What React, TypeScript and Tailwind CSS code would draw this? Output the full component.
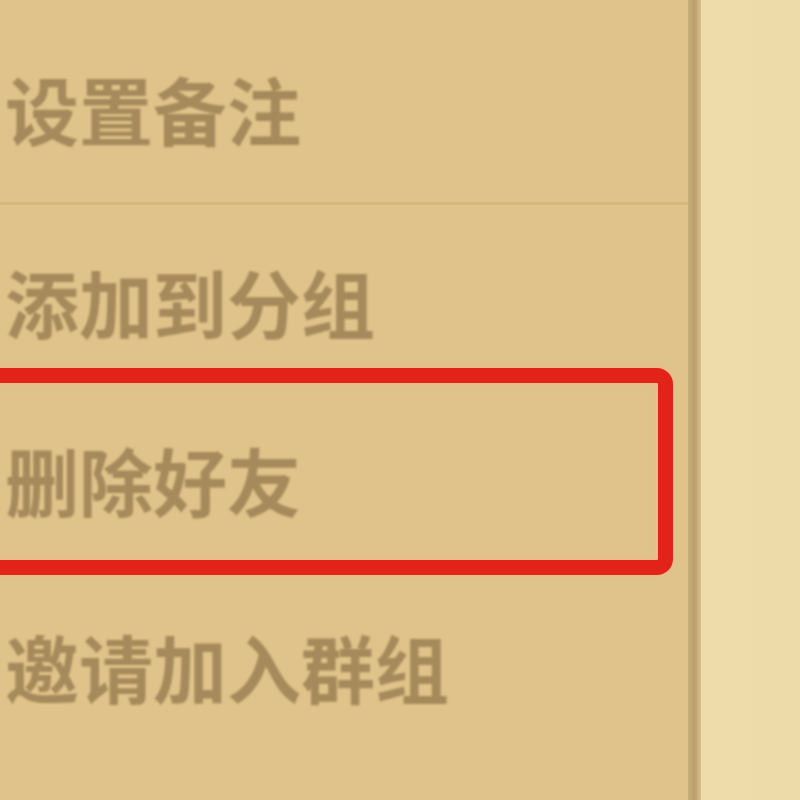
import React from "react";

const font = { fontFamily: '"Noto Sans CJK SC", "Noto Sans", sans-serif' };

export default function App() {
  return (
    <div className="flex h-[800px] w-[800px] overflow-hidden bg-[#efdcab]" style={font}>
      <div className="relative flex w-[688px] flex-col bg-[#e0c38a]">
        <div className="h-[205px] border-b-[3px] border-[#d5b77c] pl-[5px] pt-[71px]">
          <span className="block text-[74px] leading-none font-bold text-[#a68a5b] blur-[1.3px]">设置备注</span>
        </div>
        <div className="h-[185px] pl-[5px] pt-[59px]">
          <span className="block text-[74px] leading-none font-bold text-[#a68a5b] blur-[1.3px]">添加到分组</span>
        </div>
        <div className="h-[185px] pl-[5px] pt-[52px]">
          <span className="block text-[74px] leading-none font-bold text-[#a68a5b] blur-[1.3px]">删除好友</span>
        </div>
        <div className="flex-1 pl-[5px] pt-[54px]">
          <span className="block text-[74px] leading-none font-bold text-[#a68a5b] blur-[1.3px]">邀请加入群组</span>
        </div>
        <div className="absolute left-[-24px] top-[368px] h-[207px] w-[697px] rounded-[16px] border-[15px] border-[#e2231a] shadow-[0_0_5px_#f3b38a,inset_0_0_6px_#f3b38a] blur-[0.6px]" />
      </div>
      <div className="w-[13px] bg-gradient-to-r from-[#c9ae78] via-[#b9a06e] to-[#d8c08c]" />
      <div className="flex-1 bg-gradient-to-r from-[#efdcab] to-[#eedbaa]" />
    </div>
  );
}
